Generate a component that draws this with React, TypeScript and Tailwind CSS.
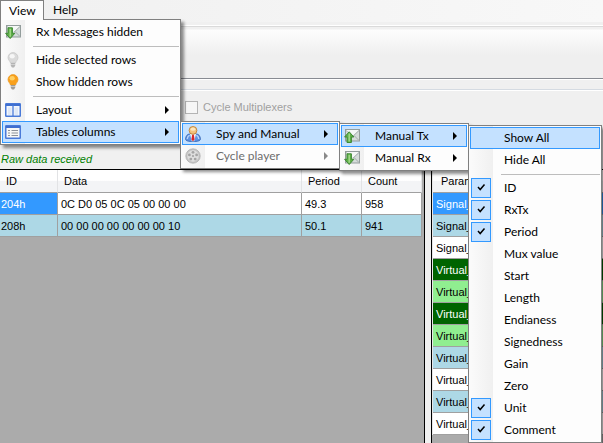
import React from 'react';

type IconProps = { className?: string };

function MailIcon({ up }: { up?: boolean }) {
  return (
    <svg viewBox="0 0 16 16" className="size-4">
      <rect x="1.500" y="1.500" width="14" height="11.500" fill="#d5dcda" stroke="#939d9c" />
      <path d="M2 2h13L9 8z" fill="#f4f7f6" />
      <path d="M15 2.500L9 8.200M15 12.500L10 7.500" stroke="#a2abaa" fill="none" />
      <path d="M2 2.500l5 4.500" stroke="#b3bbb9" fill="none" />
      {up ? (
        <>
          <path d="M5.200 3.800L.6 9h2.400v5.500h4.400V9h2.400z" fill="#5fae48" stroke="#3f8a35" strokeLinejoin="round" />
          <path d="M5.200 5.500v8" stroke="#a5dc8c" strokeWidth="1.400" />
        </>
      ) : (
        <>
          <path d="M5.200 14.500L.6 9.300h2.400V3.800h4.400v5.500h2.400z" fill="#5fae48" stroke="#3f8a35" strokeLinejoin="round" />
          <path d="M5.200 4.800v8" stroke="#a5dc8c" strokeWidth="1.400" />
        </>
      )}
    </svg>
  );
}

function BulbIcon({ lit }: { lit?: boolean }) {
  return (
    <svg viewBox="0 0 16 16" className="size-4">
      <path
        d="M8 .6a5 5 0 0 0-5 5c0 2.400 2 3.400 2.500 5.400h5c.5-2 2.500-3 2.500-5.400a5 5 0 0 0-5-5z"
        fill={lit ? '#f9a01b' : '#dadada'}
        stroke={lit ? '#e8951c' : '#c4c4c4'}
        strokeWidth=".7"
      />
      <ellipse cx="7.200" cy="4.200" rx="2.600" ry="2.200" fill={lit ? '#ffcf62' : '#f6f6f6'} />
      <path d="M5.800 11h4.400v2.800L9 15.500H7l-1.200-1.700z" fill={lit ? '#a09c96' : '#b4b4b4'} />
      <path d="M5.800 12.500h4.400" stroke="#e4e4e4" strokeWidth=".6" />
    </svg>
  );
}

function LayoutIcon() {
  return (
    <svg viewBox="0 0 16 16" className="size-4">
      <rect x=".75" y="1.750" width="14.500" height="12.500" rx=".5" fill="#f3f7fd" stroke="#4a7ad8" strokeWidth="1.500" />
      <path d="M1 3h14" stroke="#3f6fd0" strokeWidth="2" />
      <path d="M8 3v11" stroke="#4a7ad8" strokeWidth="1.300" />
      <path d="M3 5.500h3.500V13H3zM9.500 5.500H13V13H9.500z" fill="#dfe8f6" />
    </svg>
  );
}

function ListIcon() {
  return (
    <svg viewBox="0 0 16 16" className="size-4">
      <rect x=".75" y="1.750" width="14.500" height="12.500" rx=".5" fill="#f8f8f6" stroke="#4a7ad8" strokeWidth="1.500" />
      <path d="M1 3h14" stroke="#3f6fd0" strokeWidth="2" />
      <path d="M3 6.500h2M3 9h2M3 11.500h2M6.500 6.500h6.500M6.500 9h6.500M6.500 11.500h6.500" stroke="#8d9299" />
    </svg>
  );
}

function PersonIcon() {
  return (
    <svg viewBox="0 0 16 16" className="size-4">
      <path d="M.6 13.200c0-3.200 1.800-5.200 4.200-5.200h6.400c2.400 0 4.200 2 4.200 5.200 0 1.700-3 2.300-7.400 2.300S.6 14.900.6 13.200z" fill="#5f93e2" stroke="#2d5dae" strokeWidth=".8" />
      <path d="M2.200 13c.2-2 1-3.200 2.400-3.800M13.800 13c-.2-2-1-3.200-2.400-3.800" stroke="#b9d4f8" strokeWidth="1.400" fill="none" />
      <path d="M5 8h6l-1.800 7.300H6.800z" fill="#f2f6fc" />
      <path d="M7.200 8.500h1.600l.8 5-1.600 1.800-1.600-1.800z" fill="#d8262a" />
      <circle cx="8" cy="4.400" r="3.900" fill="#f3c27c" stroke="#b97a2e" strokeWidth=".8" />
      <ellipse cx="8" cy="3.200" rx="2.400" ry="1.600" fill="#fde6bd" />
    </svg>
  );
}

function ReelIcon() {
  return (
    <svg viewBox="0 0 16 16" className="size-4">
      <circle cx="8" cy="8" r="7.200" fill="#c4c4c4" stroke="#aeaeae" strokeWidth=".8" />
      <circle cx="8" cy="8" r="5.700" fill="#dedede" />
      <g fill="#a4a4a4">
        <circle cx="8" cy="4.300" r="1.400" />
        <circle cx="11.600" cy="6.900" r="1.400" />
        <circle cx="10.200" cy="11.100" r="1.400" />
        <circle cx="5.800" cy="11.100" r="1.400" />
        <circle cx="4.400" cy="6.900" r="1.400" />
      </g>
      <circle cx="8" cy="8" r=".9" fill="#9a9a9a" />
    </svg>
  );
}

function Arrow({ className }: IconProps) {
  return (
    <svg viewBox="0 0 4 8" className={`mr-[9px] h-2 w-1 ${className ?? ''}`}>
      <path d="M0 0l4 4-4 4z" fill="currentColor" />
    </svg>
  );
}

function Menu({ label, className, children }: { label: string; className: string; children: React.ReactNode }) {
  return (
    <ul
      role="menu"
      aria-label={label}
      className={`absolute z-10 border border-[#808080] bg-[#fdfdfd] bg-[linear-gradient(to_right,#fbfbfb,#f0f0f0)] bg-[length:24px_100%] bg-no-repeat p-px text-black shadow-[3px_3px_3px_rgba(0,0,0,0.45)] ${className}`}
    >
      {children}
    </ul>
  );
}

type ItemProps = {
  icon?: React.ReactNode;
  text: string;
  arrow?: boolean;
  active?: boolean;
  disabled?: boolean;
  children?: React.ReactNode;
};

function Item({ icon, text, arrow, active, disabled, children }: ItemProps) {
  return (
    <li role="none" className="relative">
      <button
        type="button"
        role="menuitem"
        disabled={disabled}
        aria-haspopup={arrow ? 'menu' : undefined}
        className={`flex h-[22px] w-full items-center border text-left ${
          active ? 'border-[#3399ff] bg-[#c4e1ff]' : 'border-transparent'
        } ${disabled ? 'text-[#6d6d6d]' : ''}`}
      >
        <span className="flex w-[33px] shrink-0 pl-0.5">{icon}</span>
        <span className="flex-1 whitespace-nowrap">{text}</span>
        {arrow && <Arrow className={disabled ? 'text-[#8a8a8a]' : ''} />}
      </button>
      {children}
    </li>
  );
}

function CheckItem({ text, checked }: { text: string; checked?: boolean }) {
  return (
    <li role="none">
      <label className="flex h-[22px] items-center">
        <span className="grid w-[34px] shrink-0 justify-start pl-px">
          <input
            type="checkbox"
            defaultChecked={checked}
            className="peer col-start-1 row-start-1 size-5 appearance-none checked:border checked:border-[#3399ff] checked:bg-[#c4e1ff]"
          />
          <svg viewBox="0 0 20 20" className="pointer-events-none invisible col-start-1 row-start-1 size-5 peer-checked:visible">
            <path d="M7 9l2.200 2.500L13.500 6.500" fill="none" stroke="#000" strokeWidth="1.500" />
          </svg>
        </span>
        <span>{text}</span>
      </label>
    </li>
  );
}

function Separator() {
  return (
    <li role="separator" className="flex h-1.5 items-center pl-[31px]">
      <span className="h-px flex-1 bg-[#bdbdbd]" />
    </li>
  );
}

const columns: [string, boolean][] = [
  ['ID', true],
  ['RxTx', true],
  ['Period', true],
  ['Mux value', false],
  ['Start', false],
  ['Length', false],
  ['Endianess', false],
  ['Signedness', false],
  ['Gain', false],
  ['Zero', false],
  ['Unit', true],
  ['Comment', true],
];

const frames = [
  { id: '204h', data: '0C D0 05 0C 05 00 00 00', period: '49.3', count: '958', row: 'bg-white', first: 'bg-[#3399ff] text-white' },
  { id: '208h', data: '00 00 00 00 00 00 00 10', period: '50.1', count: '941', row: 'bg-[#add8e6]', first: '' },
];

const params = [
  ['Signal_', 'bg-[#3399ff] text-white'],
  ['Signal_', 'bg-[#add8e6]'],
  ['Signal_', 'bg-white'],
  ['Virtual_', 'bg-[#006400] text-white'],
  ['Virtual_', 'bg-[#90ee90]'],
  ['Virtual_', 'bg-[#006400] text-white'],
  ['Virtual_', 'bg-[#90ee90]'],
  ['Virtual_', 'bg-[#add8e6]'],
  ['Virtual_', 'bg-white'],
  ['Virtual_', 'bg-[#add8e6]'],
  ['Virtual_', 'bg-white'],
];

const head = 'border-b border-r border-b-[#a0a0a0] border-r-[#e2e3e5] pl-[6px] font-normal';
const cell = 'border-b border-r border-[#a0a0a0] pl-[3px]';
const headRow = 'h-[23px] bg-[linear-gradient(to_bottom,#ffffff_45%,#f3f4f6_50%)] text-left';

export default function App() {
  return (
    <div className="flex min-h-screen flex-col overflow-hidden bg-[#f0f0f0] font-['Liberation_Sans',Arial,sans-serif] text-[11px] leading-4 text-black">
      <nav className="flex h-[22px] bg-linear-to-r from-[#f0f0f0] to-[#f8f8f8] font-[Lato,'Open_Sans',sans-serif] text-xs leading-4">
        <div className="relative">
          <button type="button" className="relative z-20 flex h-5 w-11 items-center border border-b-0 border-[#808080] bg-[#fdfdfd] pl-2">
            View
          </button>
          <Menu label="View" className="top-[19px] left-0 w-[181px]">
            <Item icon={<MailIcon />} text="Rx Messages hidden" />
            <Separator />
            <Item icon={<BulbIcon />} text="Hide selected rows" />
            <Item icon={<BulbIcon lit />} text="Show hidden rows" />
            <Separator />
            <Item icon={<LayoutIcon />} text="Layout" arrow />
            <Item icon={<ListIcon />} text="Tables columns" arrow active>
              <Menu label="Tables columns" className="top-0 left-[calc(100%+1px)] w-[160px]">
                <Item icon={<PersonIcon />} text="Spy and Manual" arrow active>
                  <Menu label="Spy and Manual" className="top-0 left-[calc(100%+1px)] w-[130px]">
                    <Item icon={<MailIcon up />} text="Manual Tx" arrow active>
                      <Menu label="Manual Tx" className="top-0 left-[calc(100%+1px)] w-[134px]">
                        <Item text="Show All" active />
                        <Item text="Hide All" />
                        <Separator />
                        {columns.map(([text, checked]) => (
                          <CheckItem key={text} text={text} checked={checked} />
                        ))}
                      </Menu>
                    </Item>
                    <Item icon={<MailIcon />} text="Manual Rx" arrow />
                  </Menu>
                </Item>
                <Item icon={<ReelIcon />} text="Cycle player" arrow disabled />
              </Menu>
            </Item>
          </Menu>
        </div>
        <button type="button" className="flex h-5 items-center px-[9px]">
          Help
        </button>
      </nav>

      <div className="mt-[3px] border-y border-white">
        <div className="h-[53px] border-t border-b border-t-[#dadada] border-b-[#888b92] bg-[linear-gradient(to_bottom,#f0f0f0_2px,#fdfdfd_3px,#efefef_28px)]" />
      </div>

      <section className="mt-[9px] border-t border-[#d5dbe2]">
        <div className="border-t border-white pt-2 pl-[185px]">
          <label className="flex items-center gap-[5px] text-[#a0a0a0]">
            <input type="checkbox" disabled className="size-[13px] appearance-none border border-[#b4b4b4] bg-[#f6f6f6]" />
            Cycle Multiplexers
          </label>
        </div>
        <p className="mt-9 h-[18px] pl-px text-[#008000] italic">Raw data received</p>
      </section>

      <main className="flex flex-1">
        <section className="w-[425px] shrink-0 border-t border-r border-black bg-[#ababab]">
          <table className="w-[422px] table-fixed border-separate border-spacing-0">
            <colgroup>
              <col className="w-[58px]" />
              <col />
              <col className="w-[60px]" />
              <col className="w-[60px]" />
            </colgroup>
            <thead>
              <tr className={headRow}>
                <th className={head}>ID</th>
                <th className={head}>Data</th>
                <th className={head}>Period</th>
                <th className={head}>Count</th>
              </tr>
            </thead>
            <tbody>
              {frames.map((f) => (
                <tr key={f.id} className={`h-[22px] ${f.row}`}>
                  <td className={`border-r border-b border-[#a0a0a0] pl-px ${f.first}`}>{f.id}</td>
                  <td className={cell}>{f.data}</td>
                  <td className={cell}>{f.period}</td>
                  <td className={cell}>{f.count}</td>
                </tr>
              ))}
            </tbody>
          </table>
        </section>
        <div className="w-1.5 shrink-0" />
        <section className="min-w-0 flex-1 border-t border-l border-black bg-[#ababab]">
          <table className="w-full table-fixed border-separate border-spacing-0 border-l border-[#e8e8e8]">
            <thead>
              <tr className={headRow}>
                <th className="border-b border-[#a0a0a0] pl-2 font-normal">Param</th>
              </tr>
            </thead>
            <tbody>
              {params.map(([name, tone], i) => (
                <tr key={i} className={`h-[22px] ${tone}`}>
                  <td className="border-b border-[#a0a0a0] pl-[3px]">{name}</td>
                </tr>
              ))}
            </tbody>
          </table>
        </section>
      </main>
    </div>
  );
}
